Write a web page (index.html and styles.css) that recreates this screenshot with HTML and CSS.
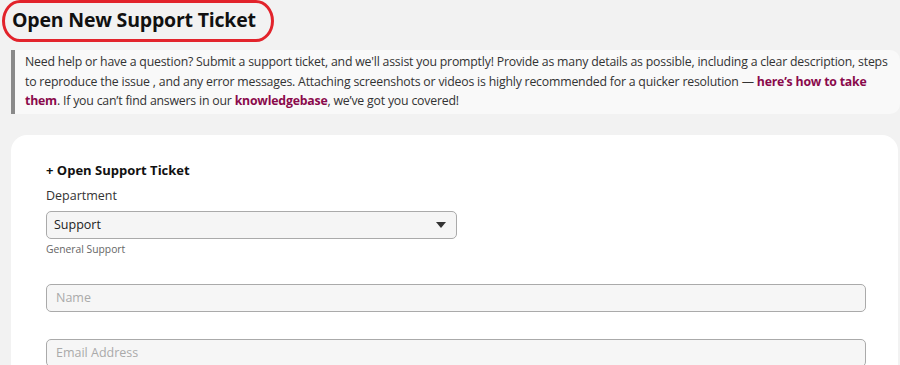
FILE: index.html
```html
<!DOCTYPE html>
<html>
<head>
<meta charset="utf-8">
<link rel="stylesheet" href="styles.css">
</head>
<body>
<div class="page">
  <div class="title-wrap">
    <h1 class="title">Open New Support Ticket</h1>
    <span class="annotation"></span>
  </div>
  <div class="intro">
    Need help or have a question? Submit a support ticket, and we'll assist you promptly! Provide as many details as possible, including a clear description, steps to reproduce the issue , and any error messages. Attaching screenshots or videos is highly recommended for a quicker resolution — <a href="#" class="link">here’s how to take them</a>. If you can’t find answers in our <a href="#" class="link">knowledgebase</a>, we’ve got you covered!
  </div>
  <div class="card">
    <h2 class="card-title">+ Open Support Ticket</h2>
    <label class="label">Department</label>
    <div class="select">
      <span>Support</span>
      <svg class="caret" width="10" height="6" viewBox="0 0 10 6"><path d="M0 0h10L5 6z" fill="#333"/></svg>
    </div>
    <div class="hint">General Support</div>
    <div class="input">Name</div>
    <div class="input">Email Address</div>
  </div>
</div>
</body>
</html>
```
FILE: styles.css
```css
html, body {
  margin: 0;
  padding: 0;
  background: #f2f2f2;
  font-family: "Open Sans", "DejaVu Sans", sans-serif;
  color: #222;
  overflow: hidden;
}
.page {
  padding: 0 0 0 11px;
}
.title-wrap {
  position: relative;
  padding: 7px 0 0 1px;
  height: 50px;
  box-sizing: border-box;
}
.title {
  margin: 0;
  font-size: 19.5px;
  font-weight: 700;
  letter-spacing: -0.2px;
  color: #111;
  line-height: 26px;
}
.annotation {
  position: absolute;
  left: -9px;
  top: 0;
  width: 272px;
  height: 42px;
  border: 3px solid #e2232b;
  border-radius: 18px / 21px;
  box-sizing: border-box;
}
.intro {
  background: #f9f9f9;
  border-left: 4px solid #8a8a8a;
  border-radius: 0 10px 10px 0;
  padding: 2px 6px 3px 10px;
  font-size: 12.3px;
  letter-spacing: -0.2px;
  line-height: 19.5px;
  color: #333;
}
.link {
  color: #8a0a4c;
  font-weight: 700;
  text-decoration: none;
}
.card {
  margin-top: 21px;
  background: #fff;
  border-radius: 16px 16px 0 0;
  padding: 27px 32px 0 35px;
  height: 240px;
  margin-right: 2px;
}
.card-title {
  margin: 0;
  font-size: 13px;
  font-weight: 700;
  color: #111;
  line-height: 16px;
}
.label {
  display: block;
  margin-top: 10px;
  font-size: 12.5px;
  color: #333;
  line-height: 16px;
}
.select {
  margin-top: 7px;
  width: 411px;
  height: 28px;
  box-sizing: border-box;
  border: 1px solid #aaa;
  border-radius: 5px;
  background: #f5f5f5;
  display: flex;
  align-items: center;
  justify-content: space-between;
  padding: 0 10px 0 7px;
  font-size: 12.5px;
  color: #222;
}
.hint {
  margin-top: 4px;
  font-size: 10.3px;
  color: #666;
  line-height: 13px;
}
.input {
  margin-top: 28px;
  height: 28px;
  box-sizing: border-box;
  border: 1px solid #aaa;
  border-radius: 5px;
  background: #f6f6f6;
  display: flex;
  align-items: center;
  padding-left: 9px;
  font-size: 12.5px;
  color: #aaa;
}
.input + .input {
  margin-top: 27px;
}
```
